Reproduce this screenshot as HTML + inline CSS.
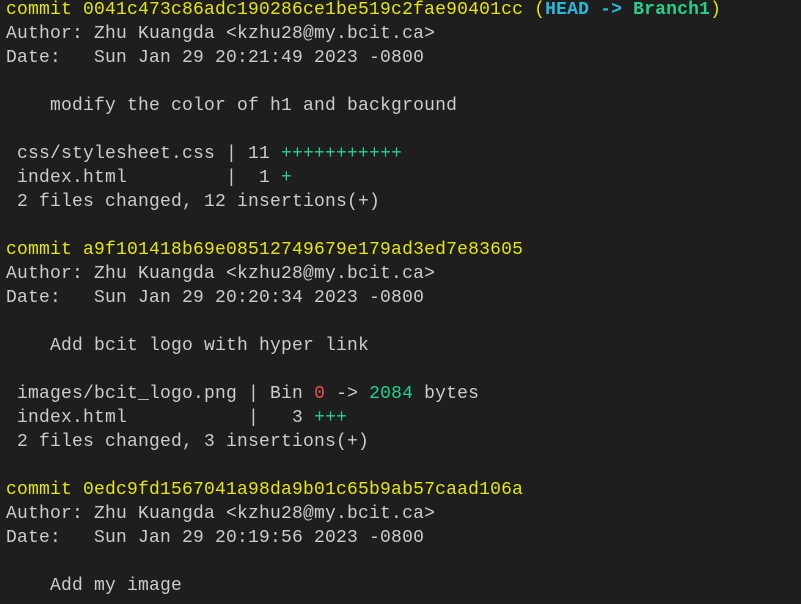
<!DOCTYPE html>
<html><head><meta charset="utf-8"><style>
html,body{margin:0;padding:0;background:#1e1e1e;width:801px;height:604px;overflow:hidden}
pre{margin:0;position:absolute;left:6px;top:-2px;font-family:"Liberation Mono",monospace;font-size:18px;letter-spacing:0.2px;line-height:24px;color:#cccccc;white-space:pre}
.y{color:#e5e510}.c{color:#29b8db;font-weight:bold}.g{color:#23d18b}.gb{color:#23d18b;font-weight:bold}.r{color:#f14c4c}
</style></head><body><pre><span class="y">commit 0041c473c86adc190286ce1be519c2fae90401cc (<span class="c">HEAD -&gt; </span><span class="gb">Branch1</span>)</span>
Author: Zhu Kuangda &lt;kzhu28@my.bcit.ca&gt;
Date:   Sun Jan 29 20:21:49 2023 -0800

    modify the color of h1 and background

 css/stylesheet.css | 11 <span class="g">+++++++++++</span>
 index.html         |  1 <span class="g">+</span>
 2 files changed, 12 insertions(+)

<span class="y">commit a9f101418b69e08512749679e179ad3ed7e83605</span>
Author: Zhu Kuangda &lt;kzhu28@my.bcit.ca&gt;
Date:   Sun Jan 29 20:20:34 2023 -0800

    Add bcit logo with hyper link

 images/bcit_logo.png | Bin <span class="r">0</span> -&gt; <span class="g">2084</span> bytes
 index.html           |   3 <span class="g">+++</span>
 2 files changed, 3 insertions(+)

<span class="y">commit 0edc9fd1567041a98da9b01c65b9ab57caad106a</span>
Author: Zhu Kuangda &lt;kzhu28@my.bcit.ca&gt;
Date:   Sun Jan 29 20:19:56 2023 -0800

    Add my image
</pre></body></html>
